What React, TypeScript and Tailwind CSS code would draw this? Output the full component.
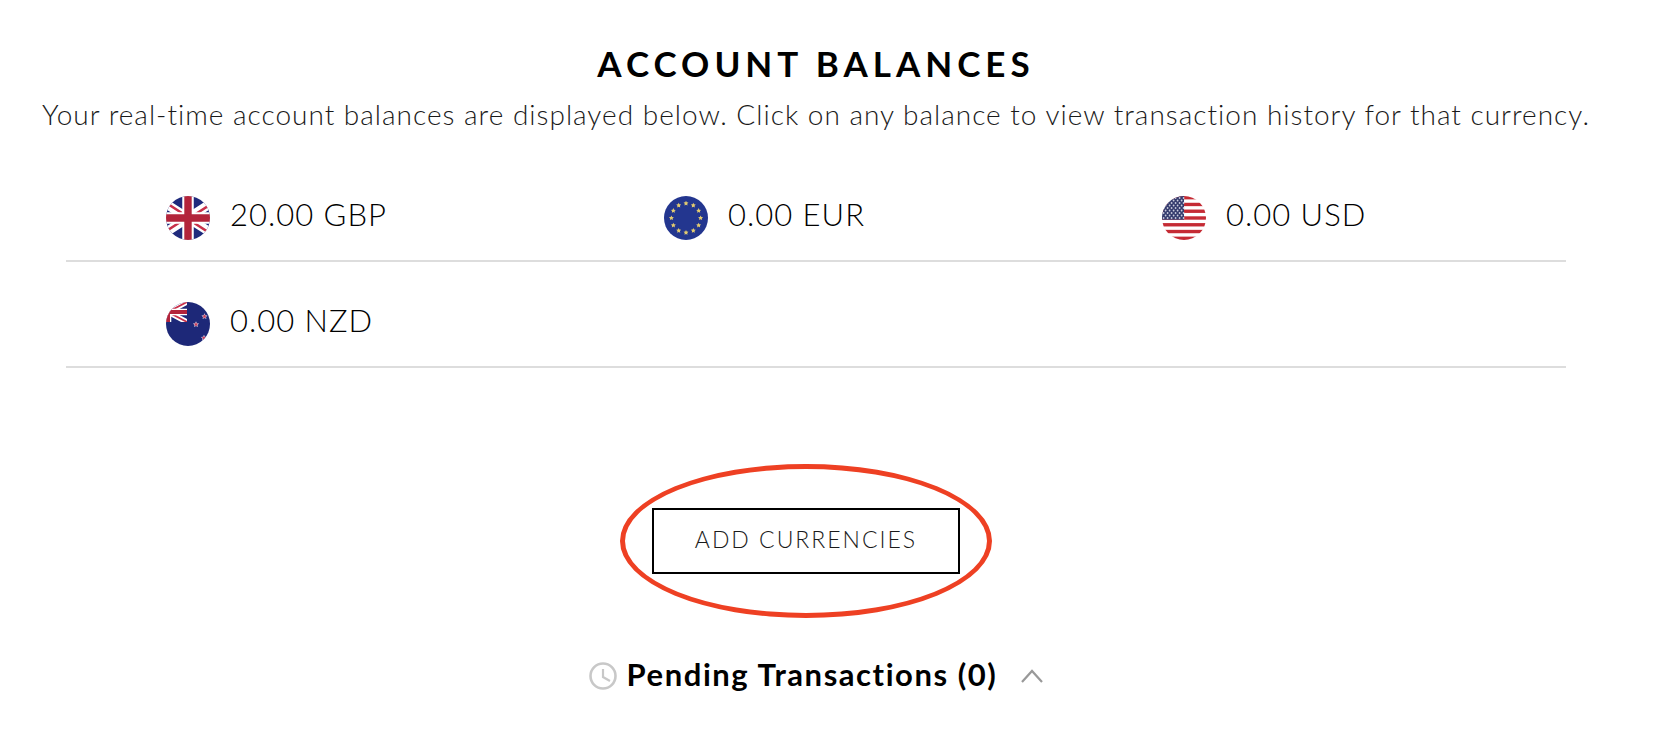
import { useState } from "react";

type Balance = { code: string; amount: string };

const rows: Balance[][] = [
  [
    { code: "GBP", amount: "20.00" },
    { code: "EUR", amount: "0.00" },
    { code: "USD", amount: "0.00" },
  ],
  [{ code: "NZD", amount: "0.00" }],
];

const starPoints = (cx: number, cy: number, r: number) =>
  Array.from({ length: 10 }, (_, i) => {
    const radius = i % 2 === 0 ? r : r * 0.5;
    const angle = (Math.PI / 5) * i - Math.PI / 2;
    return `${cx + radius * Math.cos(angle)},${cy + radius * Math.sin(angle)}`;
  }).join(" ");

const GbFlag = () => (
  <>
    <rect width="44" height="44" fill="#1f2a7c" />
    <path d="M-9 2 L53 42 M53 2 L-9 42" stroke="#fff" strokeWidth="9" />
    <path d="M-9 1 L22 21 M53 43 L22 23" stroke="#c8304a" strokeWidth="2.6" />
    <path d="M53 3 L22 23 M-9 41 L22 21" stroke="#c8304a" strokeWidth="2.6" />
    <path d="M22 0 V44 M0 22 H44" stroke="#fff" strokeWidth="11.5" />
    <path d="M22 0 V44 M0 22 H44" stroke="#b3243b" strokeWidth="7.4" />
  </>
);

const EuFlag = () => (
  <>
    <rect width="44" height="44" fill="#23368f" />
    {Array.from({ length: 12 }, (_, i) => {
      const angle = (Math.PI / 6) * i;
      return (
        <polygon
          key={i}
          points={starPoints(22 + 14.6 * Math.cos(angle), 22 + 14.6 * Math.sin(angle), 2.6)}
          fill="#e3cb70"
        />
      );
    })}
  </>
);

const UsFlag = () => (
  <>
    <rect width="44" height="44" fill="#fff" />
    {[0, 1, 2, 3, 4, 5, 6].map((i) => (
      <rect key={i} y={i * 6.77} width="44" height="3.38" fill="#c52b34" />
    ))}
    <rect width="22" height="23.7" fill="#353c6e" />
    {[0, 1, 2, 3, 4, 5, 6, 7, 8].map((row) =>
      [0, 1, 2, 3, 4, 5].map((col) => (
        <circle
          key={`${row}-${col}`}
          cx={1.6 + col * 4 + (row % 2) * 2}
          cy={2 + row * 2.5}
          r={col === 5 && row % 2 === 1 ? 0 : 0.9}
          fill="#c9cbdc"
        />
      ))
    )}
  </>
);

const NzFlag = () => (
  <>
    <rect width="44" height="44" fill="#1d2878" />
    <svg x="-17" y="0" width="38" height="20" viewBox="0 0 38 20">
      <path d="M0 0 L38 20 M38 0 L0 20" stroke="#fff" strokeWidth="5.5" />
      <path d="M0 0 L38 20 M38 0 L0 20" stroke="#c8304a" strokeWidth="1.8" />
      <path d="M19 0 V20 M0 10 H38" stroke="#fff" strokeWidth="6.6" />
      <path d="M19 0 V20 M0 10 H38" stroke="#b3243b" strokeWidth="4" />
    </svg>
    {[
      [30, 22.5],
      [38.5, 14.5],
      [38, 36],
      [47, 18],
    ].map(([x, y]) => (
      <g key={`${x}-${y}`}>
        <polygon points={starPoints(x, y, 3.2)} fill="#d9d3e6" />
        <polygon points={starPoints(x, y, 2.2)} fill="#c8405c" />
      </g>
    ))}
  </>
);

const flags: Record<string, () => React.JSX.Element> = {
  GBP: GbFlag,
  EUR: EuFlag,
  USD: UsFlag,
  NZD: NzFlag,
};

const BalanceItem = ({ code, amount }: Balance) => {
  const Flag = flags[code];

  return (
    <a href={`#${code}`} className="flex items-center gap-5 pl-[100px] text-black">
      <svg viewBox="0 0 44 44" className="size-11 shrink-0 rounded-full" aria-hidden="true">
        <Flag />
      </svg>
      <span className="pb-2 text-[31px] leading-9 tracking-[1px]">
        {amount} {code}
      </span>
    </a>
  );
};

export default function App() {
  const [open, setOpen] = useState(true);

  return (
    <main className="min-h-screen bg-white pt-10 pr-7 text-center font-['Lato','Liberation_Sans',sans-serif] font-light">
      <h1 className="text-[35px] leading-[46px] font-bold tracking-[5px] text-black">ACCOUNT BALANCES</h1>
      <p className="pt-1 text-[28px] leading-12 tracking-[1px] text-[#1a1a1a]">
        Your real-time account balances are displayed below. Click on any balance to view transaction history for that
        currency.
      </p>

      <section className="px-[66px] pt-[18px]">
        {rows.map((row, i) => (
          <div key={i} className="grid grid-cols-3 border-b-2 border-[#ddd] pt-10 pr-1.5 pb-5">
            {row.map((balance) => (
              <BalanceItem key={balance.code} {...balance} />
            ))}
          </div>
        ))}
      </section>

      <div className="flex justify-center pt-35 pr-5">
        <div className="relative">
          <button
            type="button"
            className="block border-2 border-black px-[41px] pt-3 pb-4 text-[23px] leading-[34px] tracking-[2px] text-[#1a1a1a]"
          >
            ADD CURRENCIES
          </button>
          <div className="pointer-events-none absolute -inset-x-8 -inset-y-11 rounded-[50%] border-5 border-[#ee4023]" />
        </div>
      </div>

      <button
        type="button"
        aria-expanded={open}
        onClick={() => setOpen(!open)}
        className="mx-auto mt-20 flex items-center text-[31px] leading-10 font-bold text-black"
      >
        <svg viewBox="0 0 28 28" className="size-7" fill="none" stroke="#c8c8c8" strokeWidth="2.6" aria-hidden="true">
          <circle cx="14" cy="14" r="12.5" />
          <path d="M14 7 V15 L21 19" strokeWidth="2.2" />
        </svg>
        <span className="pb-1 pl-2.5 tracking-wider">Pending Transactions (0)</span>
        <svg
          viewBox="0 0 22 14"
          className={open ? "ml-6 h-3.5 w-[22px]" : "ml-6 h-3.5 w-[22px] rotate-180"}
          fill="none"
          stroke="#999"
          strokeWidth="2.2"
          aria-hidden="true"
        >
          <path d="M1 13 L11 2 L21 13" />
        </svg>
      </button>
    </main>
  );
}
